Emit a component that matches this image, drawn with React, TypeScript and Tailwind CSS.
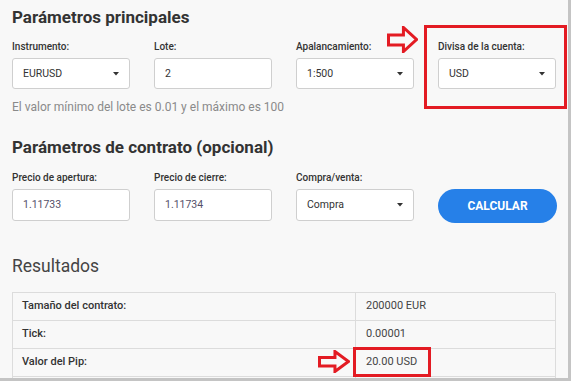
import React from "react";

const Caret = () => (
  <svg width="6" height="4" viewBox="0 0 6 4" className="shrink-0">
    <polygon points="0,0 6,0 3,3.5" fill="#333" />
  </svg>
);

const Label = ({ children }: { children: React.ReactNode }) => (
  <div className="text-[10px] leading-[14px] font-medium text-[#333] mb-[4px]">{children}</div>
);

const SelectBox = ({ value, h = 31 }: { value: string; h?: number }) => (
  <div
    className={`w-[118px] ${h === 31 ? "h-[31px]" : "h-[32px]"} bg-white border border-[#cfcfcf] rounded-[3px] flex items-center justify-between pl-[10px] pr-[10px] text-[10.5px] text-[#333]`}
  >
    <span>{value}</span>
    <Caret />
  </div>
);

const InputBox = ({ value, h = 31, color = "#333" }: { value: string; h?: number; color?: string }) => (
  <div
    className={`w-[118px] ${h === 31 ? "h-[31px]" : "h-[32px]"} bg-white border border-[#cfcfcf] rounded-[3px] flex items-center pl-[10px] text-[10.5px]`}
    style={{ color }}
  >
    {value}
  </div>
);

const Arrow = ({ w, h }: { w: number; h: number }) => {
  const s = 1.5;
  const headX = w * 0.53;
  const shT = h * 0.33;
  const shB = h * 0.7;
  const pts = [
    [s, shT],
    [headX, shT],
    [headX, s],
    [w - s, h / 2],
    [headX, h - s],
    [headX, shB],
    [s, shB],
  ]
    .map((p) => p.join(","))
    .join(" ");
  return (
    <svg width={w} height={h} viewBox={`0 0 ${w} ${h}`}>
      <polygon points={pts} fill="none" stroke="#e31b23" strokeWidth="3" strokeLinejoin="miter" />
    </svg>
  );
};

export default function App() {
  return (
    <div
      className="relative w-[571px] h-[381px] overflow-hidden bg-[#f8f8f8] border-r-[3px] border-b-[3px] border-[#c4c4c4]"
      style={{ fontFamily: "Roboto, 'Liberation Sans', sans-serif" }}
    >
      <div className="pl-[12px] pt-[6px]">
        <h2 className="text-[17px] leading-[22px] font-bold text-[#333]">Parámetros principales</h2>

        <div className="flex gap-[24px] mt-[12px]">
          <div>
            <Label>Instrumento:</Label>
            <SelectBox value="EURUSD" />
          </div>
          <div>
            <Label>Lote:</Label>
            <InputBox value="2" />
          </div>
          <div>
            <Label>Apalancamiento:</Label>
            <SelectBox value="1:500" />
          </div>
          <div>
            <Label>Divisa de la cuenta:</Label>
            <SelectBox value="USD" />
          </div>
        </div>

        <p className="mt-[10px] text-[12px] leading-[16px] text-[#8a8a8a]">
          El valor mínimo del lote es 0.01 y el máximo es 100
        </p>

        <h2 className="mt-[21px] text-[17px] leading-[22px] font-bold text-[#333]">
          Parámetros de contrato (opcional)
        </h2>

        <div className="flex items-start gap-[24px] mt-[13px]">
          <div>
            <Label>Precio de apertura:</Label>
            <InputBox value="1.11733" h={32} color="#55506a" />
          </div>
          <div>
            <Label>Precio de cierre:</Label>
            <InputBox value="1.11734" h={32} color="#55506a" />
          </div>
          <div>
            <Label>Compra/venta:</Label>
            <SelectBox value="Compra" h={32} />
          </div>
          <div className="pt-[18px]">
            <button className="w-[119px] h-[34px] rounded-full bg-[#2680e8] text-white text-[12px] font-bold">
              CALCULAR
            </button>
          </div>
        </div>

        <h2 className="mt-[32px] text-[17.5px] leading-[22px] font-normal text-[#444]">Resultados</h2>

        <div className="mt-[15px] w-[543px] grid grid-cols-[343px_200px] border-t border-l border-[#dcdcdc] text-[11px]">
          <div className="h-[28px] flex items-center pl-[9px] border-b border-r border-[#dcdcdc] font-medium text-[#333]">
            Tamaño del contrato:
          </div>
          <div className="h-[28px] flex items-center pl-[10px] border-b border-r border-[#dcdcdc] text-[#444]">
            200000 EUR
          </div>
          <div className="h-[28px] flex items-center pl-[9px] border-b border-r border-[#dcdcdc] font-medium text-[#333]">
            Tick:
          </div>
          <div className="h-[28px] flex items-center pl-[10px] border-b border-r border-[#dcdcdc] text-[#444]">
            0.00001
          </div>
          <div className="h-[28px] flex items-center pl-[9px] border-b border-r border-[#dcdcdc] font-medium text-[#333]">
            Valor del Pip:
          </div>
          <div className="h-[28px] flex items-center pl-[10px] border-b border-r border-[#dcdcdc] text-[#444]">
            20.00 USD
          </div>
          <div className="h-[28px] border-b border-r border-[#dcdcdc]" />
          <div className="h-[28px] border-b border-r border-[#dcdcdc]" />
        </div>
      </div>

      {/* annotations */}
      <div className="absolute left-[424px] top-[25px] w-[143px] h-[84px] border-[3px] border-[#e31b23]" />
      <div className="absolute left-[387px] top-[26px]">
        <Arrow w={31} h={27} />
      </div>
      <div className="absolute left-[353px] top-[347px] w-[78px] h-[30px] border-[3px] border-[#e31b23]" />
      <div className="absolute left-[318px] top-[350px]">
        <Arrow w={32} h={23} />
      </div>
    </div>
  );
}
